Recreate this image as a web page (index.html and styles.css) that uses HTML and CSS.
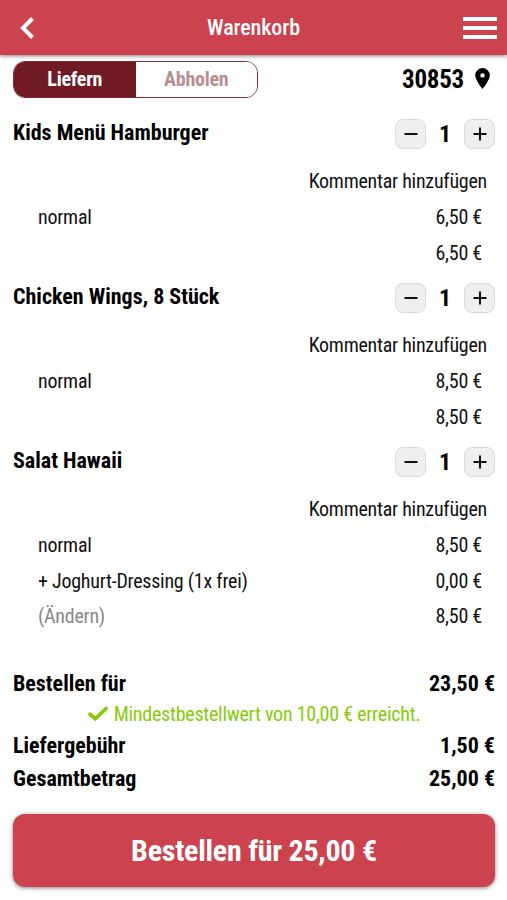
FILE: index.html
```html
<!DOCTYPE html>
<html lang="de">
<head>
    <meta charset="UTF-8">
    <meta name="viewport" content="width=device-width, initial-scale=1.0">
    <title>Warenkorb</title>
    <link rel="stylesheet" href="styles.css">
</head>
<body>
    <header class="header">
        <svg class="back-icon" width="15" height="24" viewBox="0 0 15 24"><path d="M12.500 2.500 3 12l9.500 9.500" fill="none" stroke="#fff" stroke-width="4"/></svg>
        <h1>Warenkorb</h1>
        <svg class="menu-icon" width="34" height="24" viewBox="0 0 34 24"><path d="M0 3h34M0 12h34M0 21h34" stroke="#fff" stroke-width="4"/></svg>
    </header>

    <main class="cart">
        <div class="delivery">
            <div class="toggle">
                <button class="toggle-btn active">Liefern</button>
                <button class="toggle-btn">Abholen</button>
            </div>
            <div class="location">
                <span>30853</span>
                <svg width="15" height="21" viewBox="0 0 15 21"><path fill-rule="evenodd" d="M7.500 0A7.300 7.300 0 0 0 .2 7.300C.2 12.500 7.500 21 7.500 21s7.300-8.500 7.300-13.700A7.300 7.300 0 0 0 7.500 0Zm0 5.200a2.200 2.200 0 1 1 0 4.400 2.200 2.200 0 0 1 0-4.400Z"/></svg>
            </div>
        </div>

        <section class="item">
            <div class="item-head">
                <h2>Kids Menü Hamburger</h2>
                <div class="quantity">
                    <button class="qty-btn"><svg width="14" height="14" viewBox="0 0 14 14"><path d="M.5 7h13"/></svg></button>
                    <span class="qty">1</span>
                    <button class="qty-btn"><svg width="14" height="14" viewBox="0 0 14 14"><path d="M.5 7h13M7 .5v13"/></svg></button>
                </div>
            </div>
            <div class="comment">Kommentar hinzufügen</div>
            <div class="line"><span>normal</span><span>6,50 €</span></div>
            <div class="line"><span></span><span>6,50 €</span></div>
        </section>

        <section class="item">
            <div class="item-head">
                <h2>Chicken Wings, 8 Stück</h2>
                <div class="quantity">
                    <button class="qty-btn"><svg width="14" height="14" viewBox="0 0 14 14"><path d="M.5 7h13"/></svg></button>
                    <span class="qty">1</span>
                    <button class="qty-btn"><svg width="14" height="14" viewBox="0 0 14 14"><path d="M.5 7h13M7 .5v13"/></svg></button>
                </div>
            </div>
            <div class="comment">Kommentar hinzufügen</div>
            <div class="line"><span>normal</span><span>8,50 €</span></div>
            <div class="line"><span></span><span>8,50 €</span></div>
        </section>

        <section class="item">
            <div class="item-head">
                <h2>Salat Hawaii</h2>
                <div class="quantity">
                    <button class="qty-btn"><svg width="14" height="14" viewBox="0 0 14 14"><path d="M.5 7h13"/></svg></button>
                    <span class="qty">1</span>
                    <button class="qty-btn"><svg width="14" height="14" viewBox="0 0 14 14"><path d="M.5 7h13M7 .5v13"/></svg></button>
                </div>
            </div>
            <div class="comment">Kommentar hinzufügen</div>
            <div class="line"><span>normal</span><span>8,50 €</span></div>
            <div class="line"><span>+ Joghurt-Dressing (1x frei)</span><span>0,00 €</span></div>
            <div class="line"><span class="change">(Ändern)</span><span>8,50 €</span></div>
        </section>

        <section class="summary">
            <div class="total"><span>Bestellen für</span><span>23,50 €</span></div>
            <div class="minimum">
                <svg width="20" height="16" viewBox="0 0 20 16"><path d="M2 8.200 7.300 12.800 18 2.500" fill="none" stroke="#86cc0b" stroke-width="3.800" stroke-linecap="round"/></svg>
                <span>Mindestbestellwert von 10,00 € erreicht.</span>
            </div>
            <div class="total"><span>Liefergebühr</span><span>1,50 €</span></div>
            <div class="total"><span>Gesamtbetrag</span><span>25,00 €</span></div>
        </section>

        <button class="order-btn">Bestellen für 25,00 €</button>
    </main>
</body>
</html>
```
FILE: styles.css
```css
* {
    margin: 0;
    padding: 0;
    box-sizing: border-box;
}

body {
    font-family: 'Roboto Condensed', Roboto, sans-serif;
    font-stretch: 75%;
    font-size: 20px;
    font-weight: 450;
    letter-spacing: -0.25px;
    color: #111;
    background: #fff;
    min-height: 100vh;
    overflow: hidden;
}

button {
    font: inherit;
    font-stretch: 75%;
    letter-spacing: inherit;
    border: none;
    cursor: pointer;
}

svg {
    display: block;
}

.header {
    height: 55px;
    padding: 0 10px 0 20px;
    display: grid;
    grid-template-columns: 24px 1fr 34px;
    align-items: center;
    background: #cc424e;
    color: #fff;
    box-shadow: 0 1px 4px rgba(0,0,0,0.5);
}

.header h1 {
    font-size: 22px;
    font-weight: 500;
    letter-spacing: -0.1px;
    text-align: center;
}

.cart {
    padding: 6px 12px 0 13px;
}

.delivery {
    display: flex;
    justify-content: space-between;
    align-items: center;
    height: 36px;
    margin-bottom: 17px;
}

.toggle {
    display: flex;
    width: 245px;
    height: 37px;
    border: 1px solid #7d2f39;
    border-radius: 12px;
    overflow: hidden;
}

.toggle-btn {
    flex: 1;
    background: #fff;
    color: #b98e92;
    font-weight: 700;
}

.toggle-btn.active {
    background: #701a24;
    color: #fff;
}

.location {
    display: flex;
    align-items: center;
    gap: 11px;
    padding-right: 5px;
    font-size: 25px;
    font-weight: 700;
    color: #000;
}

.location svg {
    margin-bottom: 1px;
}

.item {
    padding-bottom: 8px;
}

.item-head {
    display: flex;
    justify-content: space-between;
    align-items: center;
    height: 40px;
}

.item-head h2 {
    font-size: 22px;
    font-weight: 700;
    letter-spacing: 0;
    color: #000;
    padding-bottom: 4px;
}

.quantity {
    display: flex;
    align-items: center;
}

.qty-btn {
    display: flex;
    align-items: center;
    justify-content: center;
    width: 31px;
    height: 30px;
    border: 1px solid #dcdcdc;
    border-radius: 8px;
    background: #efefef;
}

.qty-btn path {
    stroke: #111;
    stroke-width: 2;
}

.qty {
    width: 38px;
    text-align: center;
    font-size: 24px;
    font-weight: 700;
    color: #000;
}

.comment {
    height: 45px;
    padding: 9px 8px 0 0;
    line-height: 36px;
    text-align: right;
}

.line {
    display: flex;
    justify-content: space-between;
    height: 35.5px;
    line-height: 36px;
    padding: 0 13px 0 25px;
}

.change {
    color: #888;
}

.summary {
    padding-top: 25px;
}

.total {
    display: flex;
    justify-content: space-between;
    height: 33px;
    line-height: 33px;
    font-size: 22px;
    font-weight: 700;
    letter-spacing: 0;
    color: #000;
}

.minimum {
    display: flex;
    align-items: center;
    justify-content: center;
    gap: 6px;
    height: 29px;
    font-weight: 430;
    color: #86cc0b;
}

.order-btn {
    display: block;
    width: 100%;
    height: 73px;
    margin-top: 19px;
    border-radius: 12px;
    background: #cc424e;
    color: #fff;
    font-size: 30px;
    font-weight: 700;
    box-shadow: 0 1px 4px rgba(0,0,0,0.5);
}
```
